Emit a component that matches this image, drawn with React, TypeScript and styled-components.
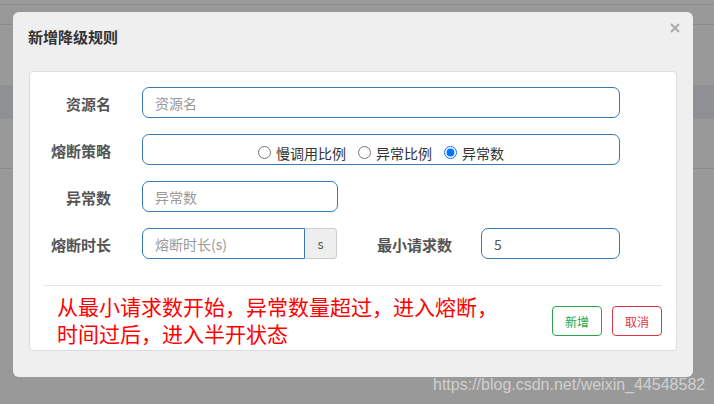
import React from 'react';
import styled, { createGlobalStyle } from 'styled-components';

const Global = createGlobalStyle`
  html, body { margin: 0; padding: 0; }
  body {
    width: 714px;
    height: 404px;
    overflow: hidden;
    background: #999;
    font-family: "Noto Sans CJK SC", "Liberation Sans", sans-serif;
  }
  * { box-sizing: border-box; }
`;

const Page = styled.div`
  position: relative;
  width: 714px;
  height: 404px;
  background: #999;
  overflow: hidden;
`;

const PageStrip = styled.div<{ $h: number; $bg?: string; $line?: string }>`
  height: ${(p) => p.$h}px;
  background: ${(p) => p.$bg ?? 'transparent'};
  border-bottom: ${(p) => (p.$line ? `1px solid ${p.$line}` : 'none')};
`;

const Modal = styled.div`
  position: absolute;
  left: 13px;
  top: 12px;
  width: 680px;
  height: 365px;
  background: #efefef;
  border-radius: 6px;
  display: flex;
  flex-direction: column;
`;

const Header = styled.div`
  display: flex;
  justify-content: space-between;
  align-items: flex-start;
  padding: 15px 13px 0 15px;
`;

const Title = styled.h4`
  margin: 0;
  font-size: 15px;
  line-height: 20px;
  font-weight: bold;
  color: #333;
`;

const Close = styled.button`
  margin-top: -4px;
  width: 10px;
  height: 10px;
  padding: 0;
  border: 0;
  background: none;
  display: flex;
  color: #aaa;
`;

const Body = styled.div`
  padding: 24px 16px 26px;
`;

const Card = styled.div`
  height: 280px;
  background: #fff;
  border: 1px solid #ddd;
  border-radius: 4px;
  padding-top: 15px;
  display: flex;
  flex-direction: column;
`;

const Rows = styled.div`
  display: flex;
  flex-direction: column;
  gap: 16px;
`;

const Row = styled.div`
  display: flex;
  align-items: center;
  height: 31px;
`;

const Label = styled.label<{ $w: number; $gap: number }>`
  width: ${(p) => p.$w}px;
  margin-right: ${(p) => p.$gap}px;
  text-align: right;
  font-size: 15px;
  font-weight: bold;
  color: #555;
  line-height: 20px;
  padding-top: 2px;
  white-space: nowrap;
  flex: none;
`;

const Input = styled.input<{ $w: number }>`
  width: ${(p) => p.$w}px;
  height: 31px;
  border: 1px solid #337ab7;
  border-radius: 7px;
  padding: 0 12px;
  font-family: inherit;
  font-size: 14px;
  color: #555;
  background: #fff;
  outline: none;
  flex: none;
  &::placeholder { color: #999; }
`;

const RadioBox = styled.div`
  width: 478px;
  height: 31px;
  border: 1px solid #337ab7;
  border-radius: 7px;
  display: flex;
  justify-content: center;
  align-items: center;
  gap: 12px;
  padding-top: 6px;
`;

const RadioItem = styled.label`
  display: flex;
  align-items: center;
  font-size: 14px;
  line-height: 18px;
  color: #333;
  white-space: nowrap;
`;

const Radio = styled.input`
  width: 13px;
  height: 13px;
  margin: 0 5px 0 0;
  accent-color: #0075ff;
`;

const Group = styled.div`
  display: flex;
  width: 195px;
  height: 31px;
  margin-right: 40px;
  flex: none;
`;

const GroupInput = styled(Input)`
  border-radius: 7px 0 0 7px;
`;

const Addon = styled.span`
  width: 32px;
  height: 31px;
  background: #eee;
  border: 1px solid #ccc;
  border-left: 0;
  border-radius: 0 4px 4px 0;
  display: flex;
  align-items: center;
  justify-content: center;
  font-size: 13px;
  color: #555;
`;

const Divider = styled.hr`
  margin: 26px 14px 0;
  border: 0;
  border-top: 1px solid #e5e5e5;
  height: 0;
`;

const Footer = styled.div`
  display: flex;
  align-items: center;
  justify-content: space-between;
  margin: 0 14px;
  padding: 8px 0 2px 13px;
`;

const Note = styled.p`
  margin: 0;
  font-family: "Liberation Sans", "Noto Sans CJK SC", sans-serif;
  font-size: 21px;
  line-height: 27px;
  color: #ff0000;
`;

const Buttons = styled.div`
  display: flex;
  gap: 10px;
`;

const Btn = styled.button<{ $c: string }>`
  width: 50px;
  height: 30px;
  padding: 0;
  background: #fff;
  border: 1px solid ${(p) => p.$c};
  border-radius: 4px;
  color: ${(p) => p.$c};
  font-family: inherit;
  font-size: 12px;
`;

const Watermark = styled.div`
  position: absolute;
  left: 433px;
  top: 377px;
  font-family: "Liberation Sans", Arial, sans-serif;
  font-size: 16px;
  line-height: 16px;
  color: rgba(255, 255, 255, 0.55);
  white-space: nowrap;
`;

export default function App() {
  return (
    <>
      <Global />
      <Page>
        <PageStrip $h={5} $bg="#9b9b9b" $line="#8b8b8b" />
        <PageStrip $h={20} $line="#8c8c8c" />
        <PageStrip $h={60} />
        <PageStrip $h={34} $bg="#8f9093" />
        <PageStrip $h={50} $line="#8c8c8c" />
        <Modal>
          <Header>
            <Title>新增降级规则</Title>
            <Close aria-label="close">
              <svg width="10" height="10" viewBox="0 0 10 10">
                <path d="M1 1 L9 9 M9 1 L1 9" stroke="currentColor" strokeWidth="2" />
              </svg>
            </Close>
          </Header>
          <Body>
            <Card>
              <Rows>
                <Row>
                  <Label $w={81} $gap={31}>资源名</Label>
                  <Input $w={478} placeholder="资源名" />
                </Row>
                <Row>
                  <Label $w={81} $gap={31}>熔断策略</Label>
                  <RadioBox>
                    <RadioItem><Radio type="radio" name="grade" />慢调用比例</RadioItem>
                    <RadioItem><Radio type="radio" name="grade" />异常比例</RadioItem>
                    <RadioItem><Radio type="radio" name="grade" defaultChecked />异常数</RadioItem>
                  </RadioBox>
                </Row>
                <Row>
                  <Label $w={81} $gap={31}>异常数</Label>
                  <Input $w={196} placeholder="异常数" />
                </Row>
                <Row>
                  <Label $w={81} $gap={31}>熔断时长</Label>
                  <Group>
                    <GroupInput $w={163} placeholder="熔断时长(s)" />
                    <Addon>s</Addon>
                  </Group>
                  <Label $w={75} $gap={29}>最小请求数</Label>
                  <Input $w={139} defaultValue="5" />
                </Row>
              </Rows>
              <Divider />
              <Footer>
                <Note>
                  从最小请求数开始，异常数量超过，进入熔断，
                  <br />
                  时间过后，进入半开状态
                </Note>
                <Buttons>
                  <Btn $c="#28a745">新增</Btn>
                  <Btn $c="#dc3545">取消</Btn>
                </Buttons>
              </Footer>
            </Card>
          </Body>
        </Modal>
        <Watermark>https://blog.csdn.net/weixin_44548582</Watermark>
      </Page>
    </>
  );
}
